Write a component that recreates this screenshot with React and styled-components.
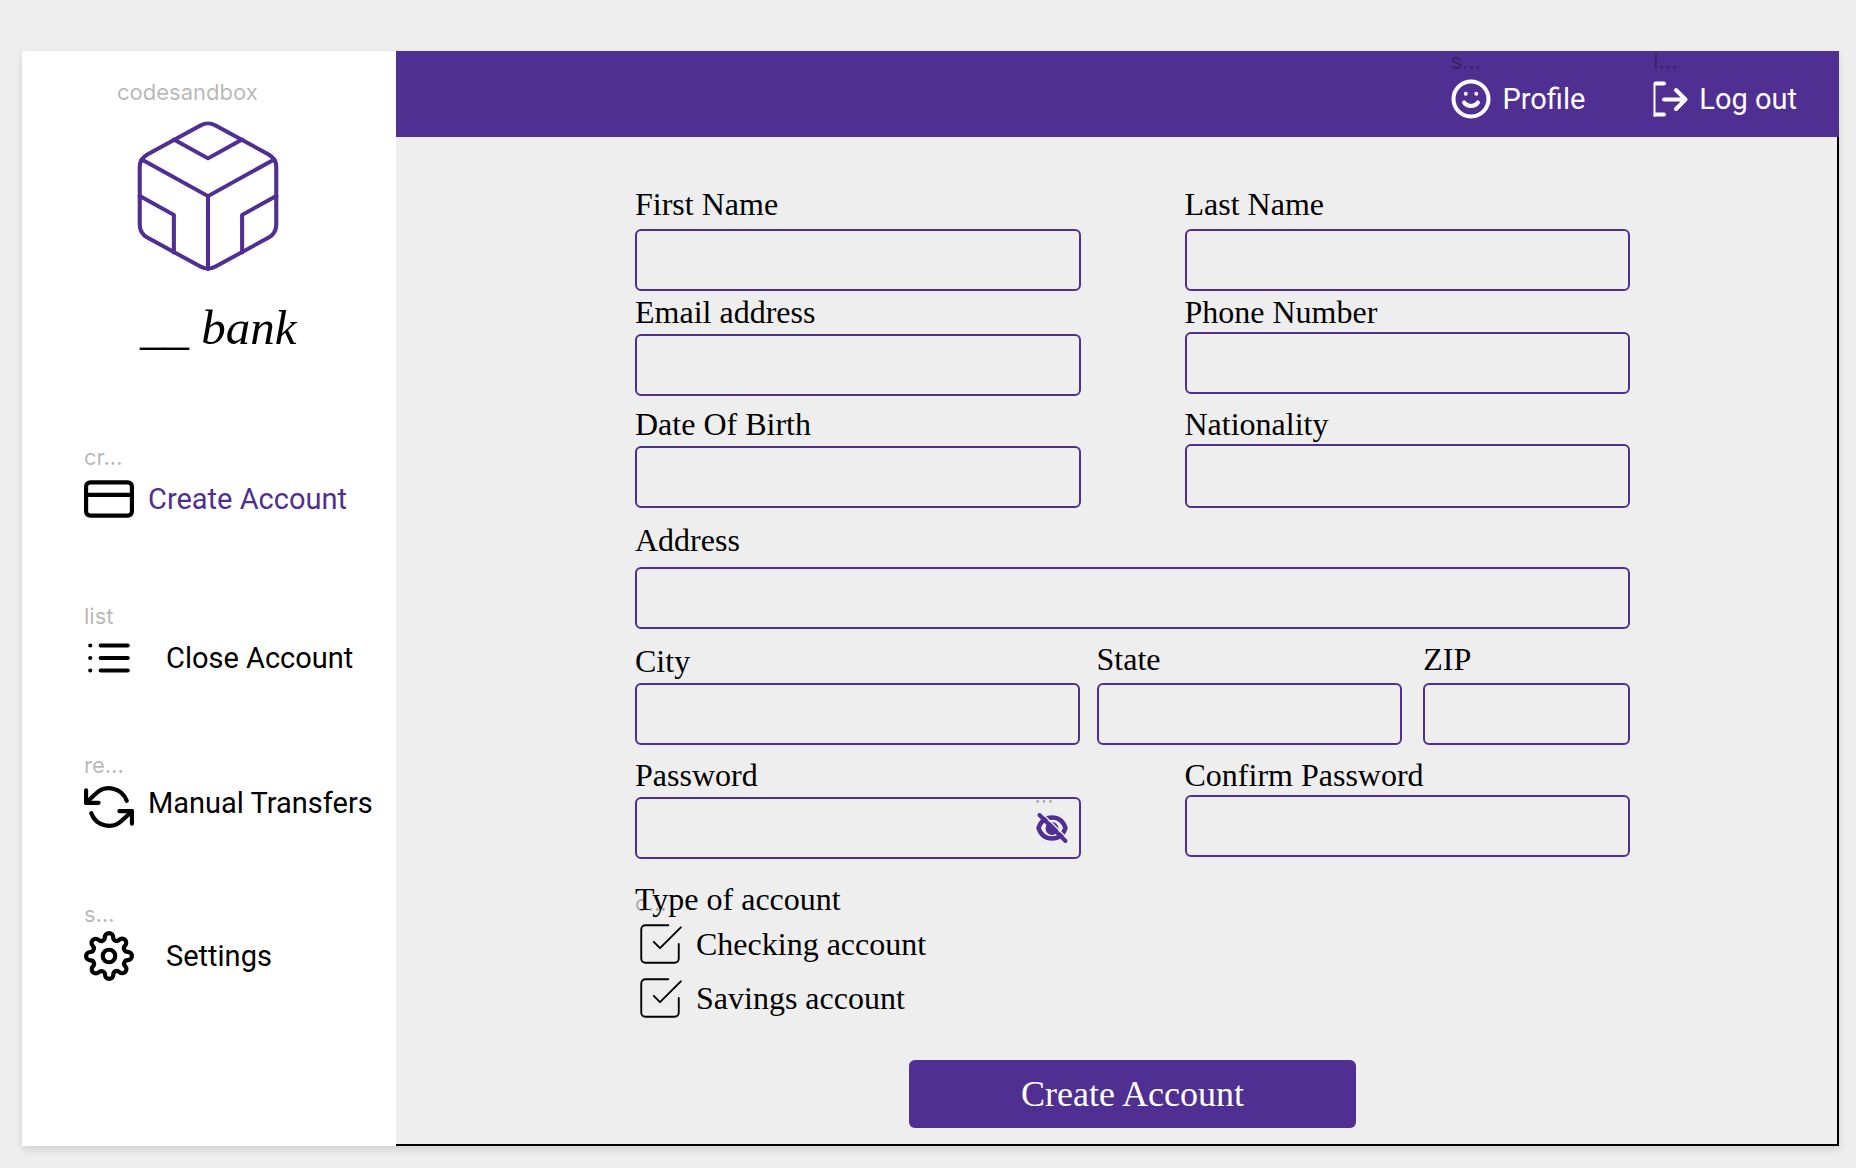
import React from "react";
import styled, { createGlobalStyle } from "styled-components";

const purple = "#502f93";
const sans = 'Roboto, "Liberation Sans", sans-serif';
const serif = '"Liberation Serif", serif';

const GlobalStyle = createGlobalStyle`
  *, *::before, *::after { box-sizing: border-box; }
  body { margin: 0; background: #eeeeee; color: #000; }
`;

const Page = styled.div`
  min-height: 100vh;
  padding: 51px 17px 20px 22px;
`;

const Frame = styled.div`
  display: grid;
  grid-template-columns: 374px minmax(0, 1fr);
  background: #eeeeee;
  box-shadow: 0 4px 8px rgba(0, 0, 0, 0.12);
`;

const Caption = styled.span`
  display: block;
  font: 400 22px/20px Inter, sans-serif;
  color: rgba(0, 0, 0, 0.3);
`;

const Sidebar = styled.aside`
  background: #fff;
  padding: 31px 0 32px;
`;

const Brand = styled.div`
  display: grid;
  gap: 7px;
  margin-left: 95px;
`;

const BrandName = styled.div`
  margin-top: 10px;
  padding-left: 23px;
  font: italic 400 49px/56px ${serif};
`;

const Nav = styled.nav`
  display: flex;
  flex-direction: column;
  gap: 72px;
  margin: 91px 0 0 62px;
`;

const NavItem = styled.div`
  display: grid;
  gap: 7px;
  padding-bottom: ${(p) => (p.$spaced ? "10px" : "0")};
`;

const NavLink = styled.a`
  display: flex;
  align-items: ${(p) => (p.$top ? "flex-start" : "center")};
  gap: ${(p) => (p.$wide ? "32px" : "14px")};
  font: 400 29px/42px ${sans};
  color: ${(p) => (p.$active ? purple : "#000")};
  text-decoration: none;
  white-space: nowrap;

  svg { flex: none; color: #000; }
`;

const Main = styled.main`
  border: solid #000;
  border-width: 0 2px 2px 0;
`;

const Header = styled.header`
  display: flex;
  justify-content: flex-end;
  gap: 68px;
  margin-right: -2px;
  padding: 0 42px 17px 0;
  background: ${purple};
`;

const HeaderItem = styled.div`
  display: grid;
  gap: 7px;
`;

const HeaderLink = styled.a`
  display: flex;
  align-items: center;
  gap: 10px;
  font: 400 29px/42px ${sans};
  color: #fff;
  text-decoration: none;
`;

const Form = styled.form`
  display: flex;
  flex-direction: column;
  padding: 49px 207px 16px 239px;
`;

const Row = styled.div`
  display: grid;
  grid-template-columns: ${(p) => p.$columns || "1fr 1fr"};
  column-gap: ${(p) => p.$gap || "104px"};
  margin-top: ${(p) => p.$space || "0"};
  align-items: ${(p) => p.$align || "start"};
`;

const FieldBox = styled.div`
  display: flex;
  flex-direction: column;
  gap: ${(p) => p.$gap};
`;

const Label = styled.label`
  font: 400 32px/36px ${serif};
`;

const Control = styled.div`
  position: relative;
  display: flex;
  flex: 1;
`;

const Input = styled.input`
  width: 100%;
  min-width: 0;
  min-height: 62px;
  padding: 0 16px;
  border: 2px solid ${purple};
  border-radius: 6px;
  background: transparent;
  font: 400 28px ${sans};
  outline: none;
`;

const Reveal = styled.button`
  position: absolute;
  top: -12px;
  right: 8px;
  display: grid;
  gap: 3px;
  width: 42px;
  padding: 0;
  border: 0;
  background: none;
  text-align: left;

  ${Caption} { padding-left: 4px; }
`;

const Types = styled.fieldset`
  display: grid;
  gap: 4px;
  min-width: 0;
  margin: 22px 0 0;
  padding: 0;
  border: 0;
`;

const Legend = styled.legend`
  position: relative;
  padding: 0;
  margin-bottom: 2px;
  font: 400 32px/36px ${serif};

  ${Caption} { position: absolute; left: 0; top: 12px; }
`;

const Option = styled.label`
  display: grid;
  grid-template-columns: 50px auto;
  align-items: center;
  justify-content: start;
  column-gap: 11px;
  font: 400 32px/36px ${serif};

  input, svg { grid-area: 1 / 1; width: 50px; height: 50px; margin: 0; }
  input { appearance: none; }
  svg { pointer-events: none; }
  .tick { visibility: hidden; }
  input:checked + svg .tick { visibility: visible; }
`;

const Submit = styled.button`
  align-self: center;
  width: 45%;
  height: 68px;
  margin-top: 37px;
  border: 0;
  border-radius: 6px;
  background: ${purple};
  color: #fff;
  font: 400 36px ${serif};
`;

function Icon({ size = 50, stroke = 2, children, ...rest }) {
  return (
    <svg width={size} height={size} viewBox="0 0 24 24" fill="none" stroke="currentColor"
      strokeWidth={stroke} strokeLinecap="round" strokeLinejoin="round" aria-hidden="true" {...rest}>
      {children}
    </svg>
  );
}

const Logo = () => (
  <svg width="182" height="174" viewBox="0 0 24 24" preserveAspectRatio="none" fill="none"
    stroke={purple} strokeWidth="0.54" strokeLinecap="round" strokeLinejoin="round" aria-hidden="true">
    <path d="M21 16V8a2 2 0 0 0-1-1.73l-7-4a2 2 0 0 0-2 0l-7 4A2 2 0 0 0 3 8v8a2 2 0 0 0 1 1.73l7 4a2 2 0 0 0 2 0l7-4A2 2 0 0 0 21 16z" />
    <path d="M7.5 4.21 12 6.81l4.5-2.6M7.5 19.79V14.6L3 12M21 12l-4.5 2.6v5.19M3.27 6.96 12 12.01l8.73-5.05M12 22.08V12" />
  </svg>
);

const CardIcon = () => (
  <Icon>
    <rect x="1" y="4" width="22" height="16" rx="2" />
    <path d="M1 10h22" />
  </Icon>
);

const ListIcon = () => (
  <Icon>
    <path d="M8 6h13M8 12h13M8 18h13M3 6h.01M3 12h.01M3 18h.01" />
  </Icon>
);

const RefreshIcon = () => (
  <Icon>
    <path d="M1 4v6h6M23 20v-6h-6" />
    <path d="M20.49 9A9 9 0 0 0 5.64 5.64L1 10m22 4-4.64 4.36A9 9 0 0 1 3.51 15" />
  </Icon>
);

const GearIcon = () => (
  <Icon>
    <circle cx="12" cy="12" r="3" />
    <path d="M19.4 15a1.65 1.65 0 0 0 .33 1.82l.06.06a2 2 0 0 1 0 2.83 2 2 0 0 1-2.83 0l-.06-.06a1.65 1.65 0 0 0-1.82-.33 1.65 1.65 0 0 0-1 1.51V21a2 2 0 0 1-2 2 2 2 0 0 1-2-2v-.09A1.65 1.65 0 0 0 9 19.4a1.65 1.65 0 0 0-1.82.33l-.06.06a2 2 0 0 1-2.83 0 2 2 0 0 1 0-2.83l.06-.06a1.65 1.65 0 0 0 .33-1.82 1.65 1.65 0 0 0-1.51-1H3a2 2 0 0 1-2-2 2 2 0 0 1 2-2h.09A1.65 1.65 0 0 0 4.6 9a1.65 1.65 0 0 0-.33-1.82l-.06-.06a2 2 0 0 1 0-2.83 2 2 0 0 1 2.83 0l.06.06a1.65 1.65 0 0 0 1.82.33H9a1.65 1.65 0 0 0 1-1.51V3a2 2 0 0 1 2-2 2 2 0 0 1 2 2v.09a1.65 1.65 0 0 0 1 1.51 1.65 1.65 0 0 0 1.82-.33l.06-.06a2 2 0 0 1 2.83 0 2 2 0 0 1 0 2.83l-.06.06a1.65 1.65 0 0 0-.33 1.82V9a1.65 1.65 0 0 0 1.51 1H21a2 2 0 0 1 2 2 2 2 0 0 1-2 2h-.09a1.65 1.65 0 0 0-1.51 1z" />
  </Icon>
);

const SmileIcon = () => (
  <Icon size={42} stroke={2.3}>
    <circle cx="12" cy="12" r="10" />
    <path d="M8 14s1.5 2 4 2 4-2 4-2M9 9h.01M15 9h.01" />
  </Icon>
);

const LogoutIcon = () => (
  <svg width="36" height="42" viewBox="0 0 36 42" fill="none" stroke="currentColor"
    strokeLinecap="round" strokeLinejoin="round" aria-hidden="true">
    <path d="M1.5 6v32" strokeWidth="2" />
    <path d="M2.5 5.500H11M2.5 36.500H11M11 21.500h21M23 12l9.500 9.500-9.500 9.500" strokeWidth="4" />
  </svg>
);

const EyeOffIcon = () => (
  <svg width="42" height="42" viewBox="0 0 42 42" fill="none" stroke={purple} strokeLinecap="round" aria-hidden="true">
    <path d="M7.500 20C10 12.500 15.500 9.500 21 9.500S32 12.500 34.500 20C32 27.500 26.500 30.500 21 30.500S10 27.500 7.500 20z"
      strokeWidth="4.400" strokeLinejoin="round" />
    <circle cx="21" cy="20.500" r="6.500" fill={purple} stroke="none" />
    <path d="M12.500 6.500 36.500 30.500" stroke="#eeeeee" strokeWidth="1.400" />
    <path d="M8.500 7 34.500 33" strokeWidth="4" />
  </svg>
);

const CheckSquare = () => (
  <Icon stroke={0.9}>
    <path className="tick" d="m9 11 3 3L22 4" />
    <path d="M21 12v7a2 2 0 0 1-2 2H5a2 2 0 0 1-2-2V5a2 2 0 0 1 2-2h11" />
  </Icon>
);

function Field({ id, label, type = "text", gap = "4px", children }) {
  return (
    <FieldBox $gap={gap}>
      <Label htmlFor={id}>{label}</Label>
      <Control>
        <Input id={id} name={id} type={type} />
        {children}
      </Control>
    </FieldBox>
  );
}

const navItems = [
  { caption: "cr...", text: "Create Account", icon: <CardIcon />, active: true, spaced: true },
  { caption: "list", text: "Close Account", icon: <ListIcon />, wide: true },
  { caption: "re...", text: "Manual Transfers", icon: <RefreshIcon />, top: true },
  { caption: "s...", text: "Settings", icon: <GearIcon />, wide: true },
];

export default function App() {
  return (
    <Page>
      <GlobalStyle />
      <Frame>
        <Sidebar>
          <Brand>
            <Caption>codesandbox</Caption>
            <Logo />
            <BrandName>__ bank</BrandName>
          </Brand>
          <Nav>
            {navItems.map((item) => (
              <NavItem key={item.text} $spaced={item.spaced}>
                <Caption>{item.caption}</Caption>
                <NavLink href="#" $active={item.active} $wide={item.wide} $top={item.top}>
                  {item.icon}
                  {item.text}
                </NavLink>
              </NavItem>
            ))}
          </Nav>
        </Sidebar>

        <Main>
          <Header>
            <HeaderItem>
              <Caption>s...</Caption>
              <HeaderLink href="#"><SmileIcon />Profile</HeaderLink>
            </HeaderItem>
            <HeaderItem>
              <Caption>l...</Caption>
              <HeaderLink href="#"><LogoutIcon />Log out</HeaderLink>
            </HeaderItem>
          </Header>

          <Form onSubmit={(e) => e.preventDefault()}>
            <Row>
              <Field id="firstName" label="First Name" gap="7px" />
              <Field id="lastName" label="Last Name" gap="7px" />
            </Row>
            <Row $space="3px">
              <Field id="email" label="Email address" type="email" />
              <Field id="phone" label="Phone Number" type="tel" gap="2px" />
            </Row>
            <Row $space="10px" $align="stretch">
              <Field id="birth" label="Date Of Birth" />
              <Field id="nationality" label="Nationality" gap="2px" />
            </Row>
            <Row $space="14px" $columns="1fr">
              <Field id="address" label="Address" gap="9px" />
            </Row>
            <Row $space="12px" $columns="445fr 534fr" $gap="17px" $align="end">
              <Field id="city" label="City" />
              <Row $columns="306fr 207fr" $gap="21px">
                <Field id="state" label="State" gap="6px" />
                <Field id="zip" label="ZIP" gap="6px" />
              </Row>
            </Row>
            <Row $space="12px">
              <Field id="password" label="Password" type="password">
                <Reveal type="button" aria-label="Show password">
                  <Caption>...</Caption>
                  <EyeOffIcon />
                </Reveal>
              </Field>
              <Field id="confirm" label="Confirm Password" type="password" gap="2px" />
            </Row>

            <Types>
              <Legend>
                <Caption>c...</Caption>
                Type of account
              </Legend>
              <Option>
                <input type="checkbox" name="checking" defaultChecked />
                <CheckSquare />
                Checking account
              </Option>
              <Option>
                <input type="checkbox" name="savings" defaultChecked />
                <CheckSquare />
                Savings account
              </Option>
            </Types>

            <Submit type="submit">Create Account</Submit>
          </Form>
        </Main>
      </Frame>
    </Page>
  );
}
